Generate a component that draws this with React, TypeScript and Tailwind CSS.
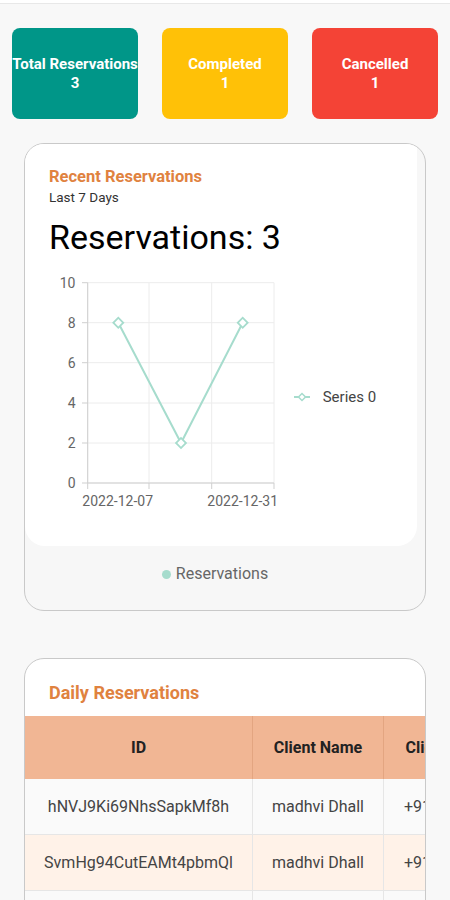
const stats = [
  { label: "Total Reservations", value: 3, color: "bg-[#009688]" },
  { label: "Completed", value: 1, color: "bg-[#ffc107]" },
  { label: "Cancelled", value: 1, color: "bg-[#f44336]" },
];

const rows = [
  { id: "hNVJ9Ki69NhsSapkMf8h", name: "madhvi Dhall", phone: "+919876543210", bg: "bg-[#fafafa]" },
  { id: "SvmHg94CutEAMt4pbmQl", name: "madhvi Dhall", phone: "+919876543210", bg: "bg-[#fff2e8]" },
  { id: "xK2pLm83QwErTy7uIo0P", name: "madhvi Dhall", phone: "+919876543210", bg: "bg-[#fafafa]" },
];

function Chart() {
  const vx = [62.7, 124, 186.7, 249];
  const hy = [14.7, 54.7, 94.7, 135, 175, 215];
  const pts: [number, number][] = [
    [93.3, 54.7],
    [156, 175],
    [217.7, 54.7],
  ];
  const line = "#a6dccd";
  return (
    <svg width="394" height="250" viewBox="0 0 394 250" className="block">
      {vx.map((x) => (
        <line key={"v" + x} x1={x} y1={14.7} x2={x} y2={215} stroke="#ececec" strokeWidth="1" />
      ))}
      {hy.map((y) => (
        <line key={"h" + y} x1={62.7} y1={y} x2={249} y2={y} stroke="#ececec" strokeWidth="1" />
      ))}
      <line x1={62.7} y1={14.7} x2={62.7} y2={215} stroke="#cfcfcf" />
      <line x1={62.7} y1={215} x2={249} y2={215} stroke="#cfcfcf" />
      {hy.map((y) => (
        <line key={"yt" + y} x1={57} y1={y} x2={62.7} y2={y} stroke="#cfcfcf" />
      ))}
      {vx.map((x) => (
        <line key={"xt" + x} x1={x} y1={215} x2={x} y2={221} stroke="#cfcfcf" />
      ))}
      {[10, 8, 6, 4, 2, 0].map((v, i) => (
        <text key={v} x={50.5} y={hy[i] + 5} textAnchor="end" fontSize="14" fill="#666" fontFamily="Roboto, sans-serif">
          {v}
        </text>
      ))}
      <text x={92.7} y={237.5} textAnchor="middle" fontSize="14" fill="#666" fontFamily="Roboto, sans-serif">
        2022-12-07
      </text>
      <text x={217.7} y={237.5} textAnchor="middle" fontSize="14" fill="#666" fontFamily="Roboto, sans-serif">
        2022-12-31
      </text>
      <polyline points={pts.map((p) => p.join(",")).join(" ")} fill="none" stroke={line} strokeWidth="2" />
      {pts.map(([x, y]) => (
        <rect
          key={x}
          x={x - 3.5}
          y={y - 3.5}
          width="7"
          height="7"
          fill="#fff"
          stroke={line}
          strokeWidth="1.8"
          transform={`rotate(45 ${x} ${y})`}
        />
      ))}
      <line x1={269} y1={129} x2={285} y2={129} stroke={line} strokeWidth="2" />
      <rect x={274.5} y={126.5} width="5" height="5" fill="#fff" stroke={line} strokeWidth="1.5" transform="rotate(45 277 129)" />
      <text x={297.7} y={134} fontSize="15" fill="#444" fontFamily="Roboto, sans-serif">
        Series 0
      </text>
    </svg>
  );
}

export default function App() {
  return (
    <div className="min-h-screen bg-[#f8f8f8] font-['Roboto',sans-serif] overflow-hidden">
      <div className="h-[4px] bg-white border-b border-[#e8e8e8]" />

      <div className="flex gap-6 px-3 mt-6">
        {stats.map((s) => (
          <div
            key={s.label}
            className={`${s.color} w-[126px] h-[91px] rounded-lg flex flex-col items-center justify-center text-white font-bold text-[15px] leading-[19px] whitespace-nowrap`}
          >
            <span>{s.label}</span>
            <span>{s.value}</span>
          </div>
        ))}
      </div>

      <div className="mx-6 mt-6 h-[468px] rounded-[20px] border border-[#c9c9c9] bg-[#f7f7f7] overflow-hidden">
        <div className="bg-white rounded-b-[20px] mr-[8px] h-[402px]">
          <div className="pl-6 pt-[23px]">
            <div className="text-[#e0823f] font-bold text-[16.5px] leading-[20px]">Recent Reservations</div>
            <div className="text-[#333] text-[13.5px] leading-[16px] mt-[2px]">Last 7 Days</div>
            <div className="text-black text-[34px] leading-[40px] mt-[12px]">Reservations: 3</div>
          </div>
          <div className="mt-[11px]">
            <Chart />
          </div>
        </div>
        <div className="flex items-center justify-center gap-[5px] pr-[20px] pt-[18px]">
          <span className="w-[9px] h-[9px] rounded-full bg-[#a6dccd]" />
          <span className="text-[#666] text-[16px] leading-[20px]">Reservations</span>
        </div>
      </div>

      <div className="mx-6 mt-[47px] rounded-[20px] border border-[#c9c9c9] bg-white overflow-hidden">
        <div className="pl-6 pt-[23px] pb-[12px] text-[#e0823f] font-bold text-[18px] leading-[22px]">
          Daily Reservations
        </div>
        <div className="flex flex-col w-[494px]">
          <div className="flex h-[63px] bg-[#f1b694] text-[#222] font-bold text-[16px]">
            <div className="w-[228px] flex items-center justify-center border-r border-[#e3a581]">ID</div>
            <div className="w-[131px] flex items-center justify-center border-r border-[#e3a581]">Client Name</div>
            <div className="w-[135px] flex items-center justify-center">Client Phone</div>
          </div>
          {rows.map((r) => (
            <div key={r.id} className={`flex h-[56px] ${r.bg} text-[#444] text-[16px] border-b border-[#e6e6e6]`}>
              <div className="w-[228px] flex items-center justify-center border-r border-[#e6e6e6]">{r.id}</div>
              <div className="w-[131px] flex items-center justify-center border-r border-[#e6e6e6]">{r.name}</div>
              <div className="w-[135px] flex items-center pl-[20px]">{r.phone}</div>
            </div>
          ))}
        </div>
      </div>
    </div>
  );
}
